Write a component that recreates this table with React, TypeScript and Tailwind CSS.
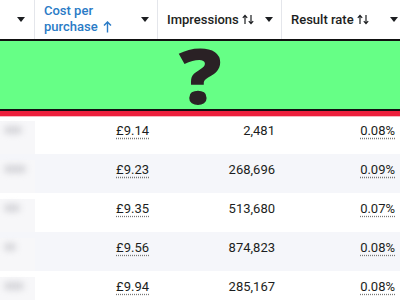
import React from 'react';

const rows = [
  { cost: '£9.14', impressions: '2,481', rate: '0.08%', blur: 'w-[18px]' },
  { cost: '£9.23', impressions: '268,696', rate: '0.09%', blur: 'w-[22px]' },
  { cost: '£9.35', impressions: '513,680', rate: '0.07%', blur: 'w-[16px]' },
  { cost: '£9.56', impressions: '874,823', rate: '0.08%', blur: 'w-[12px]' },
  { cost: '£9.94', impressions: '285,167', rate: '0.08%', blur: 'w-[20px]' },
];

const Caret = () => (
  <svg width="8" height="5" viewBox="0 0 8 5" className="shrink-0">
    <path d="M0 0 L8 0 L4 5 Z" fill="#1c1e21" />
  </svg>
);

const SortArrows = () => (
  <svg width="12" height="11" viewBox="0 0 12 11" className="inline-block ml-[3px] -mt-[2px]">
    <path d="M3 10 V1.5 M0.8 3.8 L3 1.3 L5.2 3.8" fill="none" stroke="#1c1e21" strokeWidth="1.2" />
    <path d="M9 1 V9.5 M6.8 7.2 L9 9.7 L11.2 7.2" fill="none" stroke="#1c1e21" strokeWidth="1.2" />
  </svg>
);

export default function App() {
  return (
    <div className="w-[400px] h-[300px] overflow-hidden bg-white flex flex-col text-[#1c1e21]" style={{ fontFamily: 'Roboto, "Liberation Sans", sans-serif' }}>
      {/* Header */}
      <div className="h-[39px] shrink-0 flex text-[13px] font-medium">
        <div className="w-[35px] shrink-0 flex items-center justify-end pr-[9px] border-r border-[#e4e6eb]">
          <Caret />
        </div>
        <div className="w-[123px] shrink-0 flex items-center justify-between pl-[9px] pr-[8px] border-r border-[#e4e6eb]">
          <div className="leading-[16px] text-[#2a7bc6] -mt-[2px]">
            <div>Cost per</div>
            <div className="flex items-center">
              purchase
              <svg width="9" height="12" viewBox="0 0 9 12" className="ml-[5px]">
                <path d="M4.5 11.5 V1.2 M1 4.6 L4.5 1 L8 4.6" fill="none" stroke="#2a7bc6" strokeWidth="1.4" />
              </svg>
            </div>
          </div>
          <Caret />
        </div>
        <div className="w-[124px] shrink-0 flex items-center justify-between pl-[9px] pr-[8px] border-r border-[#e4e6eb]">
          <span>Impressions<SortArrows /></span>
          <Caret />
        </div>
        <div className="flex-1 flex items-center justify-between pl-[9px] pr-[2px]">
          <span>Result rate<SortArrows /></span>
          <Caret />
        </div>
      </div>

      {/* Banner */}
      <div className="h-[72px] shrink-0 bg-[#66ff86] border-y-2 border-[#111] flex items-center justify-center">
        <span className="text-[76px] font-extrabold leading-[64px] text-[#2a2125] scale-x-[1.12]" style={{ fontFamily: '"Open Sans", sans-serif' }}>?</span>
      </div>
      <div className="h-[6px] shrink-0 bg-[#ec1f3c] border-b border-[#f7b8c0]" />

      {/* Rows */}
      <div className="flex-1 flex flex-col text-[13px]">
        {rows.map((r, i) => (
          <div
            key={i}
            className={`${i === 0 ? 'h-[37px] pt-[4px]' : 'h-[39px] pt-[6px]'} shrink-0 flex ${i % 2 === 1 ? 'bg-[#f5f6fa]' : 'bg-white'}`}
          >
            <div className="w-[35px] shrink-0 flex items-start pt-[5px] pl-[4px] bg-[#f7f7f9]">
              <div className={`${r.blur} h-[8px] rounded bg-[#d6d6da] blur-[3px]`} />
            </div>
            <div className="w-[123px] shrink-0 text-right pr-[9px]">
              <span className="underline decoration-dotted decoration-[#777] underline-offset-[3px]">{r.cost}</span>
            </div>
            <div className="w-[124px] shrink-0 text-right pr-[7px]">{r.impressions}</div>
            <div className="flex-1 text-right pr-[5px]">
              <span className="underline decoration-dotted decoration-[#777] underline-offset-[3px]">{r.rate}</span>
            </div>
          </div>
        ))}
      </div>
      <div className="h-[4px] shrink-0 bg-[#ec1f3c]" />
    </div>
  );
}
